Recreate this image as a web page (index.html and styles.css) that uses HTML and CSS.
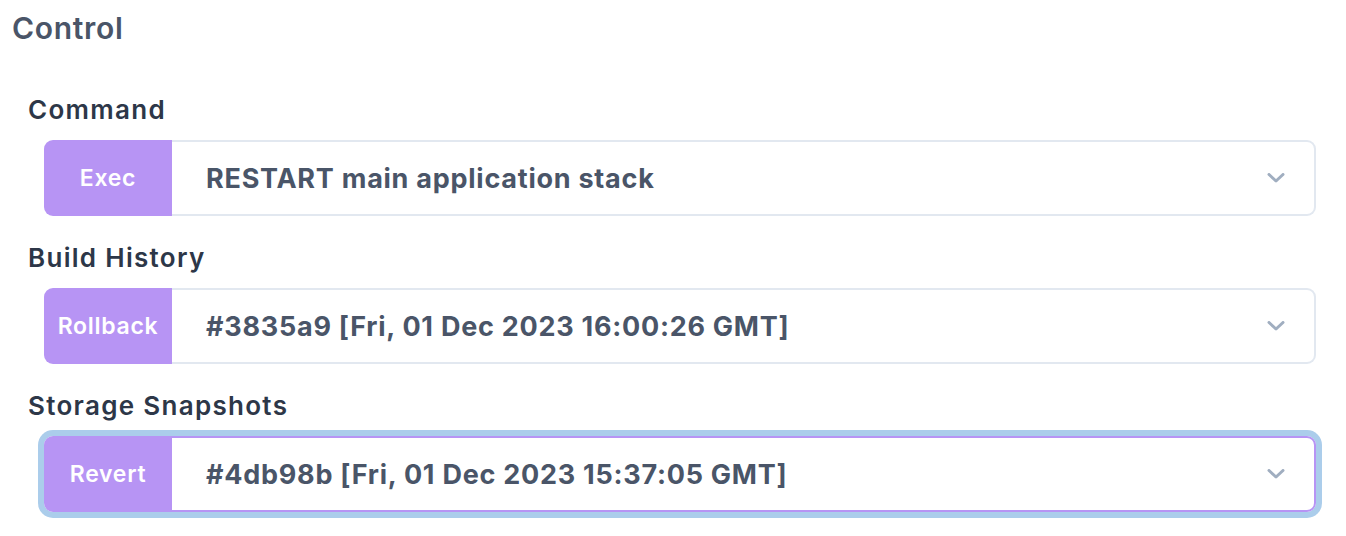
FILE: index.html
```html
<!DOCTYPE html>
<html>
<head>
<meta charset="utf-8">
<link rel="stylesheet" href="styles.css">
</head>
<body>
<div class="panel">
  <h2 class="title">Control</h2>
  <div class="fields">
    <div class="field">
      <div class="label">Command</div>
      <div class="group">
        <div class="addon">Exec</div>
        <div class="select">
          <span class="value">RESTART main application stack</span>
          <svg class="chev" width="18" height="10" viewBox="0 0 18 10"><path d="M2 1.5 L9 8 L16 1.5" fill="none" stroke="#a0aec0" stroke-width="3" stroke-linecap="round" stroke-linejoin="round"/></svg>
        </div>
      </div>
    </div>
    <div class="field">
      <div class="label">Build History</div>
      <div class="group">
        <div class="addon">Rollback</div>
        <div class="select">
          <span class="value">#3835a9 [Fri, 01 Dec 2023 16:00:26 GMT]</span>
          <svg class="chev" width="18" height="10" viewBox="0 0 18 10"><path d="M2 1.5 L9 8 L16 1.5" fill="none" stroke="#a0aec0" stroke-width="3" stroke-linecap="round" stroke-linejoin="round"/></svg>
        </div>
      </div>
    </div>
    <div class="field">
      <div class="label">Storage Snapshots</div>
      <div class="group focused">
        <div class="addon">Revert</div>
        <div class="select">
          <span class="value">#4db98b [Fri, 01 Dec 2023 15:37:05 GMT]</span>
          <svg class="chev" width="18" height="10" viewBox="0 0 18 10"><path d="M2 1.5 L9 8 L16 1.5" fill="none" stroke="#a0aec0" stroke-width="3" stroke-linecap="round" stroke-linejoin="round"/></svg>
        </div>
      </div>
    </div>
  </div>
</div>
</body>
</html>
```
FILE: styles.css
```css
* { box-sizing: border-box; }
html, body { margin: 0; padding: 0; background: #fff; }
body { font-family: Inter, "Noto Sans", sans-serif; }
.panel { padding: 10px 30px 0 12px; }
.title {
  margin: 0;
  font-size: 30px;
  font-weight: 600;
  letter-spacing: 0.7px;
  color: #4a5568;
  line-height: 36px;
}
.fields { padding: 48px 0 0 16px; }
.field { margin-bottom: 26px; }
.label {
  font-size: 26px;
  font-weight: 600;
  letter-spacing: 1.3px;
  color: #2d3748;
  line-height: 32px;
  margin-bottom: 14px;
}
.group {
  display: flex;
  height: 76px;
  margin-left: 16px;
  border-radius: 9px;
}
.addon {
  width: 128px;
  background: #b794f4;
  color: #fff;
  font-size: 23px;
  font-weight: 600;
  letter-spacing: 0.7px;
  display: flex;
  align-items: center;
  justify-content: center;
  border-radius: 9px 0 0 9px;
}
.select {
  flex: 1;
  display: flex;
  align-items: center;
  justify-content: space-between;
  border: 2px solid #e2e8f0;
  border-left: none;
  border-radius: 0 9px 9px 0;
  padding: 0 29px 0 34px;
}
.value {
  font-size: 27px;
  font-weight: 700;
  letter-spacing: 0.75px;
  color: #4a5568;
}
.focused { box-shadow: 0 0 0 6px #abcdeb; }
.focused .select { border-color: #b794f4; }
```
